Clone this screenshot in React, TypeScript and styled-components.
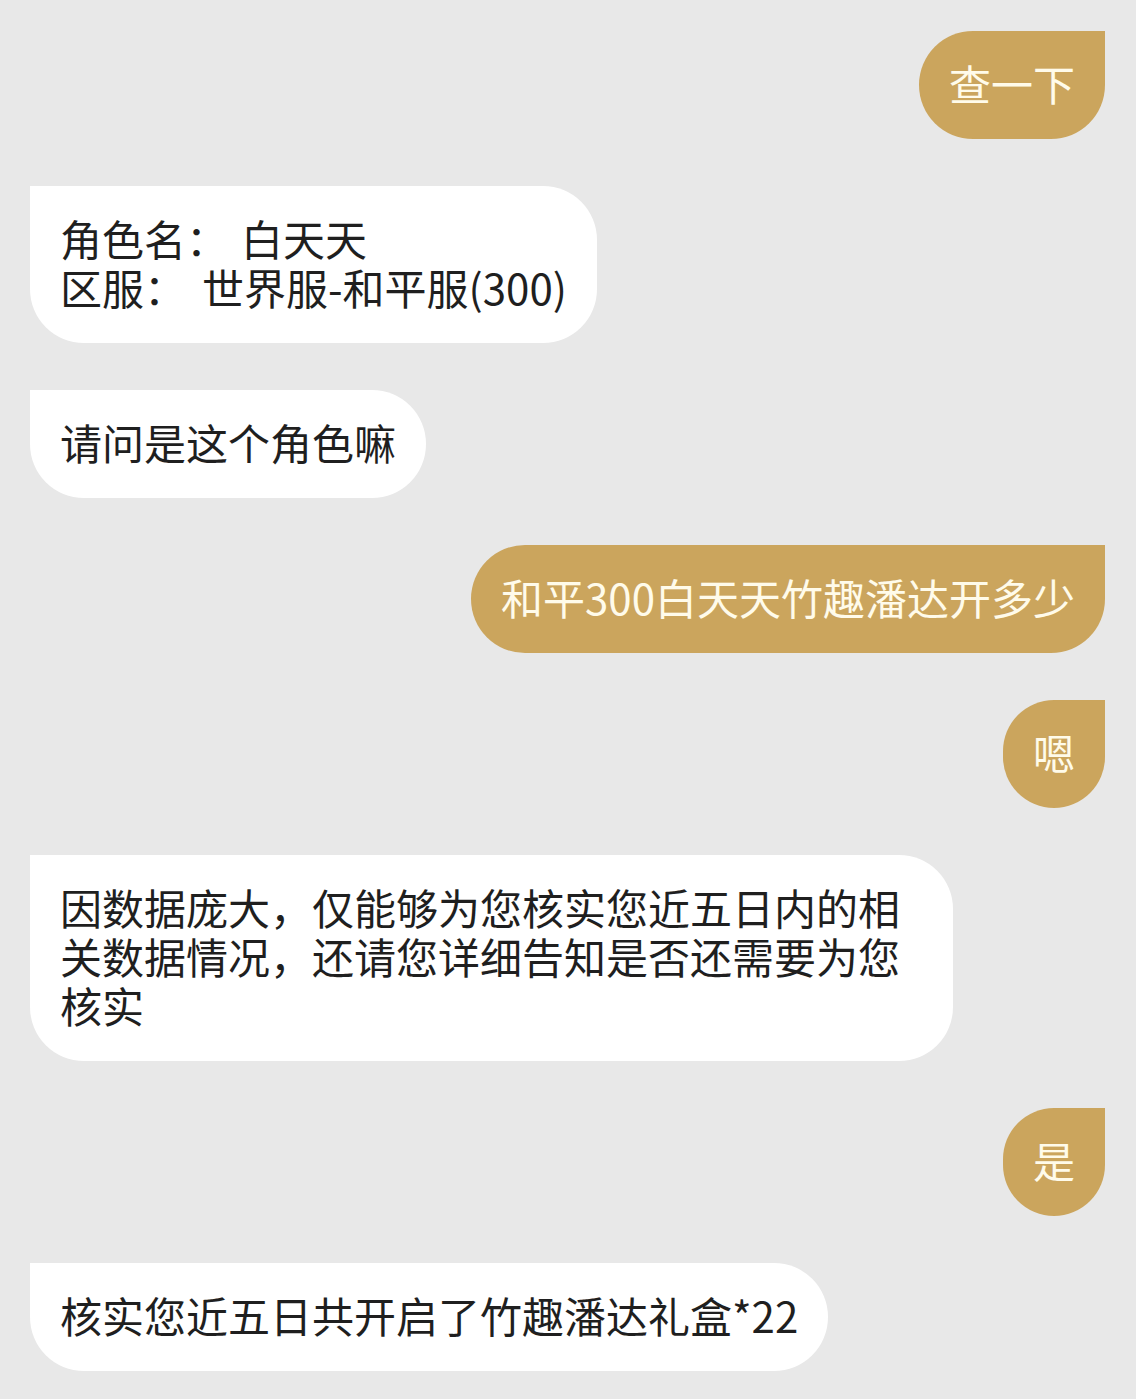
import React from "react";
import styled, { createGlobalStyle } from "styled-components";

const GlobalStyle = createGlobalStyle`
  html, body {
    margin: 0;
    padding: 0;
    background: #e8e8e8;
  }
  body {
    font-family: "Noto Sans CJK SC", "Noto Sans", sans-serif;
  }
`;

const Chat = styled.div`
  display: flex;
  flex-direction: column;
  gap: 47px;
  padding: 31px 31px 28px 30px;
  min-height: 1399px;
  box-sizing: border-box;
  background: #e8e8e8;
`;

const Row = styled.div<{ $mine?: boolean }>`
  display: flex;
  justify-content: ${(p) => (p.$mine ? "flex-end" : "flex-start")};
`;

const Bubble = styled.div<{ $mine?: boolean }>`
  max-width: 863px;
  padding: 27px 30px 32px;
  font-size: 42px;
  line-height: 49px;
  white-space: pre-wrap;
  word-break: break-all;
  background: ${(p) => (p.$mine ? "#cba55d" : "#ffffff")};
  color: ${(p) => (p.$mine ? "#fffbea" : "#1f1f1f")};
  border-radius: ${(p) => (p.$mine ? "54px 0 54px 54px" : "0 54px 54px 54px")};
`;

const Gap = styled.span<{ $w: number }>`
  display: inline-block;
  width: ${(p) => p.$w}px;
`;

type Msg = { mine: boolean; content: React.ReactNode };

const messages: Msg[] = [
  { mine: true, content: "查一下" },
  {
    mine: false,
    content: (
      <>
        角色名：<Gap $w={13} />白天天
        {"\n"}
        区服：<Gap $w={16} />世界服-和平服(300)
      </>
    ),
  },
  { mine: false, content: "请问是这个角色嘛" },
  { mine: true, content: "和平300白天天竹趣潘达开多少" },
  { mine: true, content: "嗯" },
  {
    mine: false,
    content:
      "因数据庞大，仅能够为您核实您近五日内的相关数据情况，还请您详细告知是否还需要为您核实",
  },
  { mine: true, content: "是" },
  { mine: false, content: "核实您近五日共开启了竹趣潘达礼盒*22" },
];

export default function App() {
  return (
    <>
      <GlobalStyle />
      <Chat>
        {messages.map((m, i) => (
          <Row key={i} $mine={m.mine}>
            <Bubble $mine={m.mine}>{m.content}</Bubble>
          </Row>
        ))}
      </Chat>
    </>
  );
}
